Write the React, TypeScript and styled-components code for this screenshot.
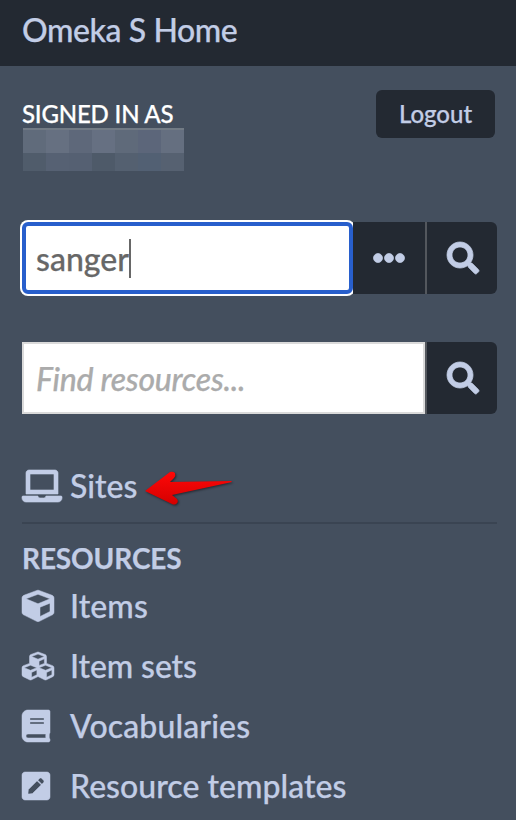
import React from 'react';
import styled, { createGlobalStyle } from 'styled-components';
import { FaSearch, FaEllipsisH, FaLaptop, FaCube, FaCubes, FaBook, FaPenSquare } from 'react-icons/fa';

const GlobalStyle = createGlobalStyle`
  *, *::before, *::after { box-sizing: border-box; }
  body { margin: 0; background: #444f5e; font-family: Lato, sans-serif; font-size: 32px; font-weight: 500; color: #c2cde6; overflow: hidden; -webkit-text-stroke: 0.25px currentColor; }
  svg { display: block; flex: none; overflow: visible; }
`;

const Sidebar = styled.div`
  width: 516px;
  height: 820px;
  overflow: hidden;
  background: #444f5e;
`;

const TopBar = styled.header`
  height: 66px;
  padding: 0 22px;
  background: #232932;
  line-height: 60px;
  letter-spacing: -0.42px;
  white-space: nowrap;
`;

const Content = styled.div`
  padding: 24px 19px 0 22px;
`;

const UserRow = styled.div`
  display: flex;
  justify-content: space-between;
  height: 132px;
  padding-right: 2px;
`;

const SignedIn = styled.div`
  padding-top: 10px;
  font-size: 24px;
  line-height: 28px;
  letter-spacing: -0.2px;
  color: #fff;
  white-space: nowrap;
`;

const HiddenName = styled.div`
  display: grid;
  grid-template-columns: repeat(7, 23px);
  grid-template-rows: 25px 18px;
  margin-left: 1px;
`;

const NameBlock = styled.span<{ $tone: string; $top: boolean }>`
  background: ${p => p.$tone};
  border-top: ${p => (p.$top ? '2px solid #727b85' : '0')};
`;

const LogoutButton = styled.button`
  width: 119px;
  height: 48px;
  padding: 0;
  border: 0;
  border-radius: 6px;
  background: #232932;
  color: #c2cde6;
  font: 500 24px/48px Lato, sans-serif;
  -webkit-text-stroke: 0.25px currentColor;
`;

const SearchRow = styled.div`
  display: flex;
  height: 72px;
  margin-bottom: 48px;
`;

const Field = styled.div<{ $focused?: boolean }>`
  flex: 1;
  display: flex;
  align-items: center;
  padding: 2px 0 0 ${p => (p.$focused ? '10px' : '12px')};
  border: ${p => (p.$focused ? '4px solid #285fcc' : '2px solid #dadada')};
  border-radius: ${p => (p.$focused ? '6px' : '0')};
  box-shadow: ${p => (p.$focused ? '0 0 0 2px #fff' : 'none')};
  background: #fff;
  color: ${p => (p.$focused ? '#676767' : '#ababab')};
  font-style: ${p => (p.$focused ? 'normal' : 'italic')};
  letter-spacing: ${p => (p.$focused ? '0' : '-0.25px')};
  line-height: 38px;
  white-space: nowrap;
`;

const Caret = styled.span`
  width: 2px;
  height: 39px;
  margin: -1px 0 0 0;
  background: #676767;
`;

const IconButton = styled.button<{ $width: number; $divided?: boolean }>`
  display: flex;
  align-items: center;
  justify-content: center;
  width: ${p => p.$width}px;
  padding: 0 0 0 ${p => (p.$divided ? '1px' : '0')};
  border: 0;
  border-left: ${p => (p.$divided ? '2px solid #53575d' : '0')};
  border-radius: ${p => (p.$divided ? '0 6px 6px 0' : '0')};
  background: #232932;
  color: #c2cde6;
  font-size: 32px;

  svg { stroke-width: 12px; stroke-linejoin: round; }
`;

const SitesLink = styled.a`
  display: flex;
  align-items: center;
  height: 60px;
  gap: 8px;
  line-height: 60px;

  svg { margin-left: -0.5px; margin-right: 0.5px; stroke-width: 10px; stroke-linejoin: round; }
`;

const SitesArea = styled.div`
  display: flex;
  height: 68px;
  margin-top: -6px;
  border-bottom: 2px solid #3a4452;
`;

const Pointer = styled.svg`
  margin: 14px 0 0 7px;
  filter: drop-shadow(1px 1px 1px rgba(20, 24, 30, 0.7));
`;

const Heading = styled.h4`
  margin: 18px 0 0;
  font-size: 28px;
  font-weight: 700;
  line-height: 32px;
  letter-spacing: -0.12px;
`;

const NavList = styled.nav`
  padding-top: 2px;
`;

const NavItem = styled.a<{ $spacing: number; $iconWidth: number }>`
  display: grid;
  grid-template-columns: 48px 1fr;
  align-items: center;
  height: 60px;
  line-height: 60px;
  letter-spacing: ${p => p.$spacing}px;
  white-space: nowrap;

  svg { width: ${p => p.$iconWidth}px; height: 32px; margin-left: -0.4px; stroke-width: 8px; stroke-linejoin: round; }
`;

const nameTones = [
  '#606b7b', '#667081', '#5e687a', '#667082', '#5f6a7a', '#5c667a', '#656f80',
  '#505c6b', '#566173', '#556072', '#4e5a69', '#546070', '#526073', '#566171',
];

const navItems = [
  { label: 'Items', Icon: FaCube, iconWidth: 32, spacing: 0.1 },
  { label: 'Item sets', Icon: FaCubes, iconWidth: 32, spacing: -0.1 },
  { label: 'Vocabularies', Icon: FaBook, iconWidth: 28, spacing: 0.12 },
  { label: 'Resource templates', Icon: FaPenSquare, iconWidth: 28, spacing: 0.03 },
];

export default function App() {
  return (
    <>
      <GlobalStyle />
      <Sidebar>
        <TopBar>Omeka S Home</TopBar>
        <Content>
          <UserRow>
            <SignedIn>
              SIGNED IN AS
              <HiddenName>
                {nameTones.map((tone, i) => <NameBlock key={i} $tone={tone} $top={i < 7} />)}
              </HiddenName>
            </SignedIn>
            <LogoutButton>Logout</LogoutButton>
          </UserRow>
          <SearchRow>
            <Field $focused>sanger<Caret /></Field>
            <IconButton $width={72} aria-label="Options"><FaEllipsisH /></IconButton>
            <IconButton $width={72} $divided aria-label="Search"><FaSearch /></IconButton>
          </SearchRow>
          <SearchRow>
            <Field>Find resources...</Field>
            <IconButton $width={72} $divided aria-label="Find"><FaSearch /></IconButton>
          </SearchRow>
          <SitesArea>
            <SitesLink><FaLaptop size={40} />Sites</SitesLink>
            <Pointer width="90" height="36" viewBox="0 0 90 36">
              <defs>
                <linearGradient id="pointerRed" x1="0" y1="0" x2="0" y2="1">
                  <stop offset="0" stopColor="#ff0808" />
                  <stop offset="1" stopColor="#d40000" />
                </linearGradient>
              </defs>
              <path d="M1 21 L26 2 Q29 1 31 3 Q32 6 30 8 L26 12 L87 11 L88 12 L28 25 L33 29 Q35 32 32 34 Q30 35 28 34 Z" fill="url(#pointerRed)" />
            </Pointer>
          </SitesArea>
          <Heading>RESOURCES</Heading>
          <NavList>
            {navItems.map(({ label, Icon, iconWidth, spacing }) => (
              <NavItem key={label} $spacing={spacing} $iconWidth={iconWidth}><Icon /><span>{label}</span></NavItem>
            ))}
          </NavList>
        </Content>
      </Sidebar>
    </>
  );
}
